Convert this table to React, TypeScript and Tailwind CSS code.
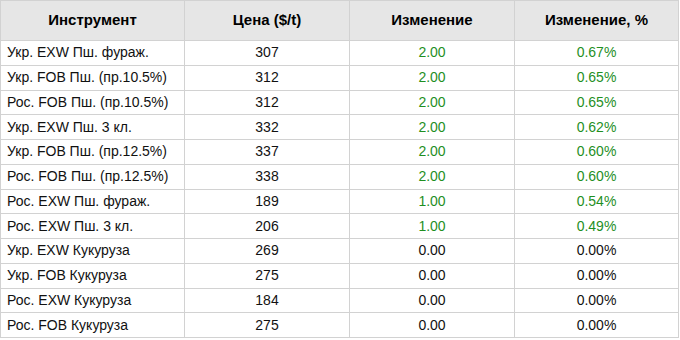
import React from "react";

const rows: [string, string, string, string, boolean][] = [
  ["Укр. EXW Пш. фураж.", "307", "2.00", "0.67%", true],
  ["Укр. FOB Пш. (пр.10.5%)", "312", "2.00", "0.65%", true],
  ["Рос. FOB Пш. (пр.10.5%)", "312", "2.00", "0.65%", true],
  ["Укр. EXW Пш. 3 кл.", "332", "2.00", "0.62%", true],
  ["Укр. FOB Пш. (пр.12.5%)", "337", "2.00", "0.60%", true],
  ["Рос. FOB Пш. (пр.12.5%)", "338", "2.00", "0.60%", true],
  ["Рос. EXW Пш. фураж.", "189", "1.00", "0.54%", true],
  ["Рос. EXW Пш. 3 кл.", "206", "1.00", "0.49%", true],
  ["Укр. EXW Кукуруза", "269", "0.00", "0.00%", false],
  ["Укр. FOB Кукуруза", "275", "0.00", "0.00%", false],
  ["Рос. EXW Кукуруза", "184", "0.00", "0.00%", false],
  ["Рос. FOB Кукуруза", "275", "0.00", "0.00%", false],
];

export default function App() {
  return (
    <div className="w-[680px] h-[340px] bg-white overflow-hidden" style={{ fontFamily: '"Liberation Sans", Arial, sans-serif' }}>
      <table className="border-collapse w-[678px] table-fixed text-[14px] text-[#111]">
        <colgroup>
          <col className="w-[184px]" />
          <col className="w-[165px]" />
          <col className="w-[165px]" />
          <col className="w-[164px]" />
        </colgroup>
        <thead>
          <tr className="h-[40px] bg-[#e6e6e6]">
            {["Инструмент", "Цена ($/t)", "Изменение", "Изменение, %"].map((h) => (
              <th key={h} className="border border-[#d2d2d2] font-bold text-[15px] text-black text-center p-0">
                {h}
              </th>
            ))}
          </tr>
        </thead>
        <tbody>
          {rows.map(([name, price, ch, pct, up]) => (
            <tr key={name} className="h-[24.75px]">
              <td className="border border-[#d2d2d2] pl-[6px] p-0 text-left whitespace-nowrap">{name}</td>
              <td className="border border-[#d2d2d2] p-0 text-center">{price}</td>
              <td className={`border border-[#d2d2d2] p-0 text-center ${up ? "text-[#1f8f1f]" : ""}`}>{ch}</td>
              <td className={`border border-[#d2d2d2] p-0 text-center ${up ? "text-[#1f8f1f]" : ""}`}>{pct}</td>
            </tr>
          ))}
        </tbody>
      </table>
    </div>
  );
}
